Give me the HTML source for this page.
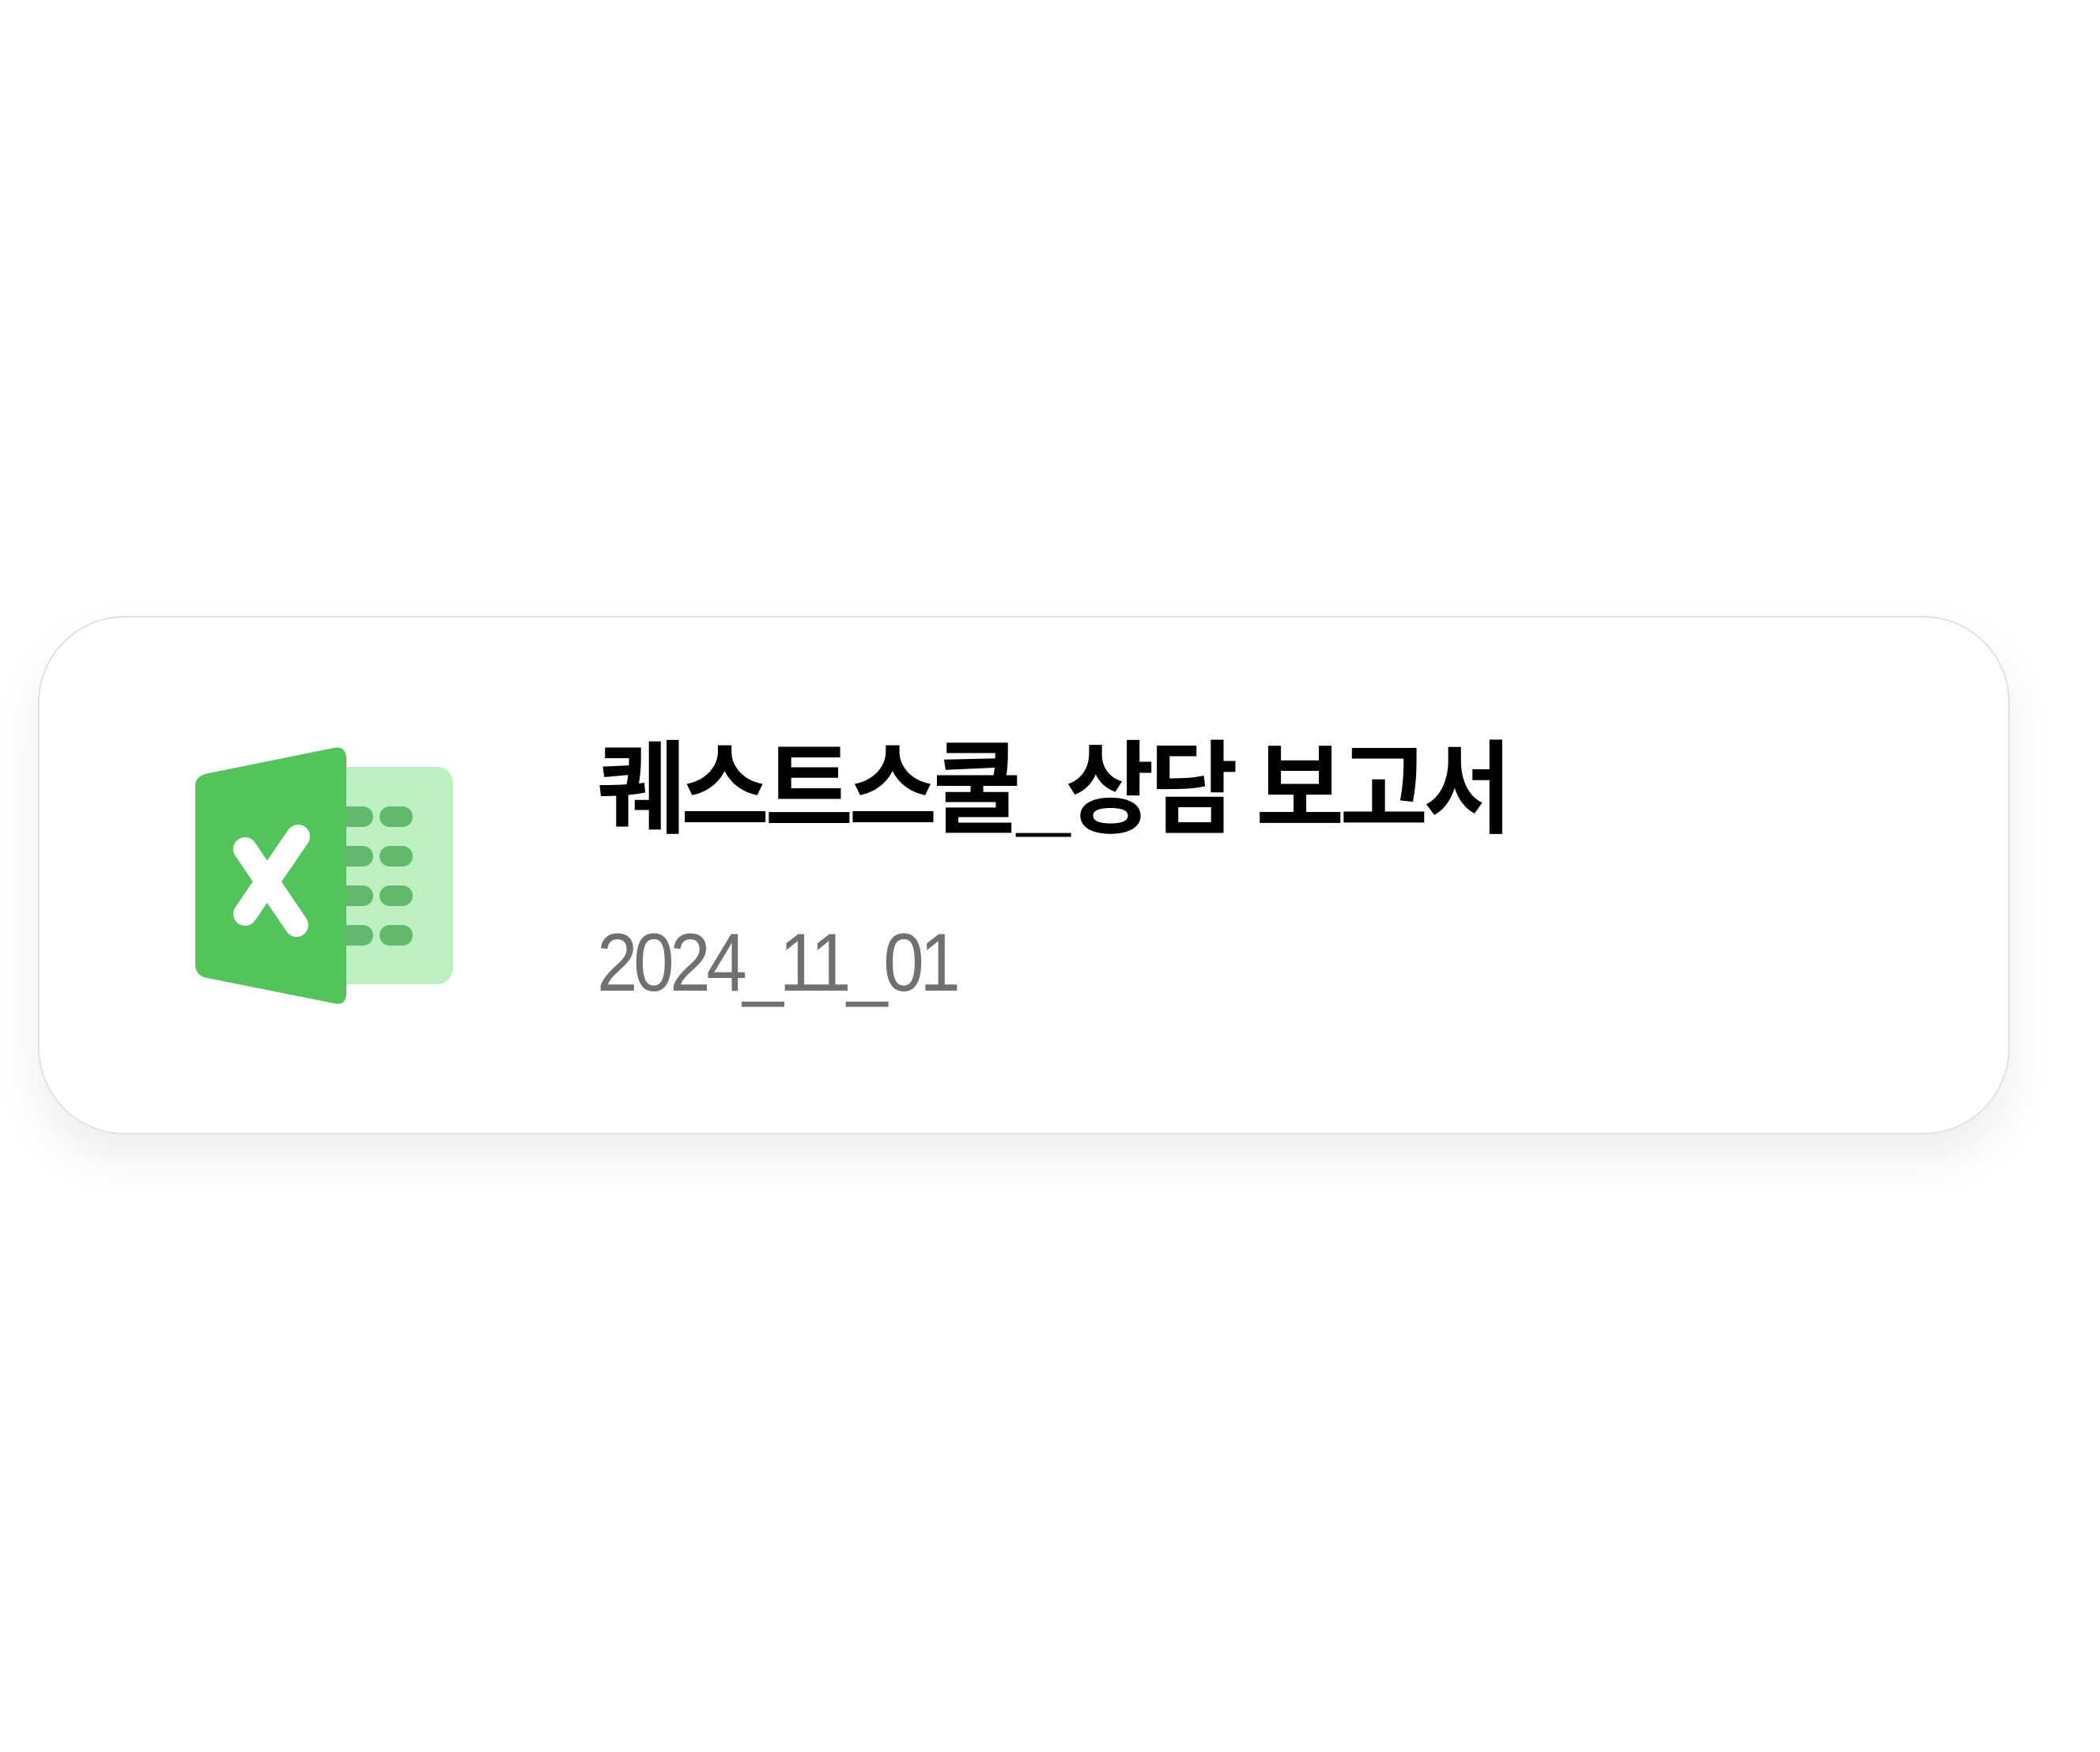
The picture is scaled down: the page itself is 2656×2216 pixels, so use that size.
<!DOCTYPE html>
<html><head><meta charset="utf-8"><style>
html,body{margin:0;padding:0;background:#fff;width:2656px;height:2216px;overflow:hidden}
.card{position:absolute;left:48px;top:779px;width:2494px;height:656px;box-sizing:border-box;border:2px solid #e2e2e2;border-radius:110px;background:#fff;box-shadow:0 30px 60px rgba(0,0,0,0.07)}
.t{position:absolute;left:755px;top:920px;font-family:"Liberation Sans","Noto Sans CJK KR",sans-serif;font-weight:bold;font-size:128px;line-height:160px;color:#000;letter-spacing:-6px;white-space:nowrap;transform:scaleX(0.95);transform-origin:0 0}
.d{position:absolute;left:755px;top:1166px;font-family:"Liberation Sans",sans-serif;font-size:104px;line-height:104px;color:#707070;letter-spacing:-6px;white-space:nowrap;transform:scaleX(0.89);transform-origin:0 0}
svg{position:absolute;left:0;top:0}
</style></head><body>
<div class="card"></div>
<svg width="2656" height="2216">
<rect x="420" y="970" width="153" height="275" rx="20" fill="#bcf0c0"/>
<g fill="#62b86b">
<rect x="420" y="1020" width="52" height="26" rx="13"/><rect x="480" y="1020" width="42" height="26" rx="13"/>
<rect x="420" y="1070" width="52" height="26" rx="13"/><rect x="480" y="1070" width="42" height="26" rx="13"/>
<rect x="420" y="1120" width="52" height="26" rx="13"/><rect x="480" y="1120" width="42" height="26" rx="13"/>
<rect x="420" y="1170" width="52" height="26" rx="13"/><rect x="480" y="1170" width="42" height="26" rx="13"/>
</g>
<path d="M264 978 L422 946 Q438 943 438 960 L438 1256 Q438 1273 422 1269 L262 1237 Q247 1234 247 1220 L247 994 Q247 981 264 978 Z" fill="#53c35c"/>
<g stroke="#fff" stroke-width="30" stroke-linecap="round">
<line x1="310" y1="1074" x2="375" y2="1170"/>
<line x1="377" y1="1058" x2="310" y2="1156"/>
</g>
</svg>
<div class="t">퀘스트스쿨_상담 보고서</div>
<div class="d">2024_11_01</div>
</body></html>
